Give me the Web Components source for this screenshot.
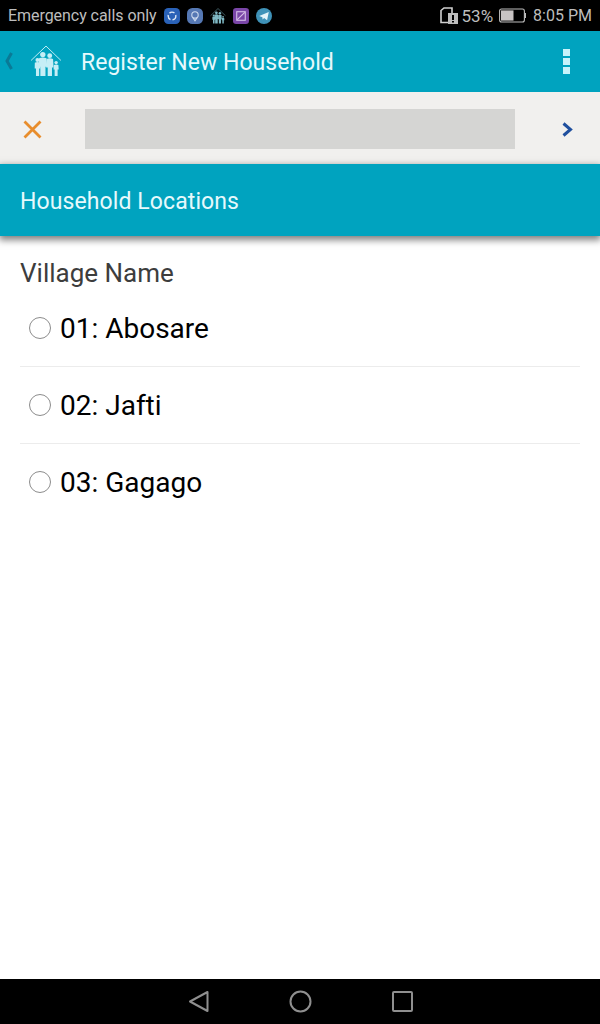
<!DOCTYPE html>
<html>
<head>
<meta charset="utf-8">
<title>Register New Household</title>
<style>
html, body { margin: 0; padding: 0; height: 100%; background: #fff; }
body { font-family: Roboto, "Liberation Sans", sans-serif; }
</style>
</head>
<body>
<phone-screen>
    <status-bar slot="top"></status-bar>
    <action-bar slot="top" title="Register New Household"></action-bar>
    <form-nav slot="top"></form-nav>
    <section-header slot="top">Household Locations</section-header>
    <radio-group label="Village Name">
        <radio-item>01: Abosare</radio-item>
        <radio-item>02: Jafti</radio-item>
        <radio-item last>03: Gagago</radio-item>
    </radio-group>
    <nav-bar slot="bottom"></nav-bar>
</phone-screen>

<script>
const FAMILY = `
    <path d="M1 14.5 L15 1 L29 14.5" fill="none" stroke="currentColor" stroke-width=".9"/>
    <g fill="currentColor">
        <circle cx="12" cy="9" r="2.5"/><path d="M8.5 12.5 q3.5 -1.6 7 0 l.6 8 h-1.6 v8.5 h-4.8 v-8.5 h-1.6 z"/>
        <circle cx="18.5" cy="10" r="2.3"/><path d="M15.6 13.2 q3 -1.4 6 0 l.5 7.8 h-1.5 v8 h-4 v-8 h-1.5 z"/>
        <circle cx="7" cy="14" r="1.9"/><path d="M4.5 16.6 q2.5 -1.2 5 0 l.3 5.4 h-1.2 v7 h-3 v-7 h-1.2 z"/>
        <circle cx="24.5" cy="16.5" r="1.6"/><path d="M22.4 18.8 q2.1 -1 4.2 0 l.3 4.2 h-1 v6 h-2.8 v-6 h-1 z"/>
    </g>`

class PhoneScreen extends HTMLElement
{
    constructor(){
        super()
        this.attachShadow({ mode: "open" })
        this.shadowRoot.innerHTML = `
            <style>
            :host { display: flex; flex-direction: column; width: 600px; height: 1024px; background: #fff; overflow: hidden; }
            main { flex: 1; min-height: 0; }
            </style>
            <slot name="top"></slot>
            <main><slot></slot></main>
            <slot name="bottom"></slot>
        `
    }
}

class StatusBar extends HTMLElement
{
    constructor(){
        super()
        this.attachShadow({ mode: "open" })
        this.shadowRoot.innerHTML = `
            <style>
            :host { display: flex; align-items: center; height: 31px; background: #000; color: #bdbdbd; font-size: 16px; padding: 0 8px; box-sizing: border-box; }
            .carrier { margin-right: 7px; letter-spacing: -.05px; }
            .apps { display: flex; align-items: center; gap: 7px; }
            .app { width: 16px; height: 16px; display: block; }
            .spacer { flex: 1; }
            .sim { margin-right: 4px; }
            .pct { font-size: 17px; }
            .batt { margin: 0 7px 0 6px; }
            .time { font-size: 16px; }
            </style>
            <span class="carrier">Emergency calls only</span>
            <span class="apps">
                <svg class="app" viewBox="0 0 15 15"><rect width="15" height="15" rx="4" fill="#2a62b8"/><circle cx="7.5" cy="7.5" r="3.6" fill="none" stroke="#dfe9f7" stroke-width="1.3" stroke-dasharray="5 2"/></svg>
                <svg class="app" viewBox="0 0 15 15"><rect width="15" height="15" rx="5" fill="#5578b4"/><circle cx="7.5" cy="6.5" r="3" fill="none" stroke="#cfdcf0" stroke-width="1"/><path d="M5.5 9 L7.5 12 L9.5 9" fill="none" stroke="#cfdcf0"/></svg>
                <svg class="app" viewBox="0 0 30 30" style="color:#7fb8c4">${FAMILY}</svg>
                <svg class="app" viewBox="0 0 15 15"><rect width="15" height="15" rx="3" fill="#7a46a8"/><rect x="3.5" y="3.5" width="8" height="8" fill="none" stroke="#d9c4ea"/><path d="M4 11 L11 4" stroke="#d9c4ea"/></svg>
                <svg class="app" viewBox="0 0 15 15"><circle cx="7.5" cy="7.5" r="7.5" fill="#3f92b8"/><path d="M3 7.5 L12 3.8 L10.4 11.4 L7.6 9.3 L6.2 10.8 L6 8.6 Z" fill="#e4f3f9"/></svg>
            </span>
            <span class="spacer"></span>
            <svg class="sim" width="18" height="17" viewBox="0 0 18 17">
                <path d="M1 3.5 L4 1 H12 V15.5 H1 Z" fill="none" stroke="#d0d0d0" stroke-width="1.6"/>
                <rect x="8" y="6" width="10" height="11" fill="#bdbdbd"/>
                <rect x="12" y="8" width="2" height="5" fill="#000"/><rect x="12" y="14" width="2" height="1.5" fill="#000"/>
            </svg>
            <span class="pct">53%</span>
            <svg class="batt" width="27" height="15" viewBox="0 0 27 15">
                <rect x=".6" y="1" width="24.8" height="13" rx="2" fill="none" stroke="#bdbdbd" stroke-width="1.1"/>
                <rect x="2" y="2.4" width="12.5" height="10.2" fill="#c8c4c4"/>
                <rect x="25.8" y="5" width="1.2" height="5" fill="#bdbdbd"/>
            </svg>
            <span class="time">8:05 PM</span>
        `
    }
}

class ActionBar extends HTMLElement
{
    connectedCallback(){
        if (this.shadowRoot) return
        this.attachShadow({ mode: "open" })
        this.shadowRoot.innerHTML = `
            <style>
            :host { display: flex; align-items: center; height: 60px; background: #00a3bf; color: #e6f9fc; box-sizing: border-box; padding-top: 2px; }
            .back { margin-left: 4px; color: #0a7a96; margin-top: -2px; }
            .logo { margin-left: 16px; color: #c5eef6; margin-top: -2px; }
            h1 { flex: 1; margin: 0 0 0 19px; font-size: 23px; font-weight: 400; color: #e6f9fc; letter-spacing: .03px; }
            .more { display: flex; flex-direction: column; gap: 2px; margin-right: 30px; margin-top: -2px; }
            .more i { width: 7px; height: 7px; background: #c8f3fa; display: block; }
            </style>
            <svg class="back" width="10" height="20" viewBox="0 0 10 20"><path d="M7.5 2 L3 10 L7.5 18" fill="none" stroke="currentColor" stroke-width="3"/></svg>
            <svg class="logo" width="32" height="32" viewBox="0 0 30 30">${FAMILY}</svg>
            <h1>${this.getAttribute('title')}</h1>
            <div class="more"><i></i><i></i><i></i></div>
        `
    }
}

class FormNav extends HTMLElement
{
    constructor(){
        super()
        this.attachShadow({ mode: "open" })
        this.shadowRoot.innerHTML = `
            <style>
            :host { display: flex; align-items: center; height: 73px; background: #f1f0ee; box-sizing: border-box; padding: 2px 24px 0 23px; border-top: 1px solid #00a3bf; }
            .bar { width: 430px; height: 40px; margin: 0 47px 0 43px; background: #d5d5d3; }
            </style>
            <svg width="19" height="19" viewBox="0 0 19 19"><path d="M1.5 1.5 L17.5 17.5 M17.5 1.5 L1.5 17.5" stroke="#e88d2c" stroke-width="2.8"/></svg>
            <div class="bar"></div>
            <svg width="11" height="15" viewBox="0 0 11 15"><path d="M1.5 1.5 L8.5 7.5 L1.5 13.5" fill="none" stroke="#1f4f9e" stroke-width="3"/></svg>
        `
    }
}

class SectionHeader extends HTMLElement
{
    constructor(){
        super()
        this.attachShadow({ mode: "open" })
        this.shadowRoot.innerHTML = `
            <style>
            :host { display: flex; align-items: center; height: 72px; padding: 2px 20px 0; box-sizing: border-box; background: #00a3bf; color: #e6f9fc; font-size: 23px; letter-spacing: .1px; box-shadow: 0 3px 7px 1px rgba(0,0,0,.5); position: relative; }
            </style>
            <slot></slot>
        `
    }
}

class RadioGroup extends HTMLElement
{
    connectedCallback(){
        if (this.shadowRoot) return
        this.attachShadow({ mode: "open" })
        this.shadowRoot.innerHTML = `
            <style>
            :host { display: block; padding: 20px 20px 0; }
            .label { font-size: 26px; line-height: 34px; color: #3d3d3d; }
            </style>
            <div class="label">${this.getAttribute('label')}</div>
            <slot></slot>
        `
    }
}

class RadioItem extends HTMLElement
{
    connectedCallback(){
        if (this.shadowRoot) return
        this.attachShadow({ mode: "open" })
        const last = this.hasAttribute('last')
        this.shadowRoot.innerHTML = `
            <style>
            :host { display: flex; align-items: center; gap: 9px; height: 76px; padding-left: 9px; box-sizing: content-box; border-bottom: 1px solid ${last ? 'transparent' : '#ececec'}; font-size: 28px; color: #000; }
            .dot { width: 20px; height: 20px; border: 1px solid #8c8c8c; border-radius: 50%; background: #fff; flex: none; margin-top: -1px; }
            .text { margin-top: 1px; }
            </style>
            <span class="dot"></span>
            <span class="text"><slot></slot></span>
        `
    }
}

class NavBar extends HTMLElement
{
    constructor(){
        super()
        this.attachShadow({ mode: "open" })
        this.shadowRoot.innerHTML = `
            <style>
            :host { display: flex; align-items: center; justify-content: center; gap: 80px; height: 45px; background: #000; }
            svg { display: block; }
            </style>
            <svg width="21" height="23" viewBox="0 0 21 23"><path d="M19.5 2 V21 L2 11.5 Z" fill="none" stroke="#8f8f8f" stroke-width="2" stroke-linejoin="round"/></svg>
            <svg width="23" height="23" viewBox="0 0 23 23"><circle cx="11.5" cy="11.5" r="10" fill="none" stroke="#8f8f8f" stroke-width="2"/></svg>
            <svg width="21" height="21" viewBox="0 0 21 21"><rect x="1" y="1" width="19" height="19" rx="1" fill="none" stroke="#8f8f8f" stroke-width="2"/></svg>
        `
    }
}

customElements.define("phone-screen", PhoneScreen)
customElements.define("status-bar", StatusBar)
customElements.define("action-bar", ActionBar)
customElements.define("form-nav", FormNav)
customElements.define("section-header", SectionHeader)
customElements.define("radio-group", RadioGroup)
customElements.define("radio-item", RadioItem)
customElements.define("nav-bar", NavBar)
</script>
</body>
</html>
